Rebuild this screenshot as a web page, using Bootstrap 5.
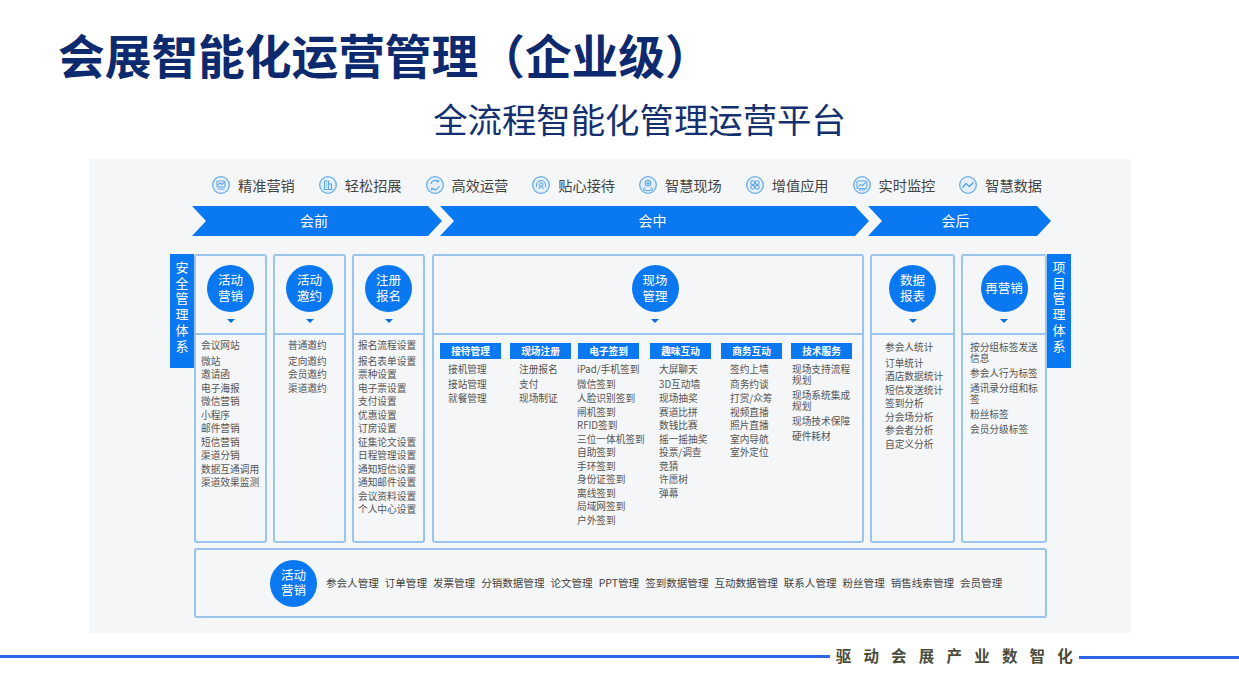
<!DOCTYPE html>
<html lang="zh-CN">
<head>
  <meta charset="UTF-8">
  <meta name="viewport" content="width=device-width, initial-scale=1.0">
  <link href="https://cdn.jsdelivr.net/npm/bootstrap@5.3.1/dist/css/bootstrap.min.css" rel="stylesheet">
  <title>会展智能化运营管理</title>
  <style>
    html, body { height: 697px; overflow: hidden; background: #fff; }
    body { font-family: "Noto Sans CJK SC", "Liberation Sans", sans-serif; }
    .page-title { margin: 0; padding: 9px 0 0 58px; height: 93px; font-size: 46.7px; line-height: 90px; font-weight: 700; color: #0d2a6e; white-space: nowrap; }
    .page-sub { height: 66px; font-size: 34.4px; line-height: 50px; text-align: center; color: #14306f; margin-left: 40px; }
    .panel-bg { width: 1042px; height: 474px; margin-left: 89px; background: #f4f6f8; padding-top: 15px; }
    .icon-row { padding-left: 123px; height: 32px; }
    .icon-item { width: 106.750px; gap: 8px; font-size: 14.2px; line-height: 22px; color: #444; flex: none; }
    .icon-item svg { width: 18px; height: 18px; flex: none; margin-top: 2px; }
    .ico { fill: none; stroke: #5ea6ea; stroke-width: 1.1; }
    .ring { fill: #e6f0fa; stroke: #68ace9; stroke-width: 1.300; }
    .trend { stroke-width: 1.600; }
    .arrow-row { padding-left: 103px; height: 48px; }
    .phase { height: 30px; line-height: 28px; background: #0a78f0; color: #fff; font-size: 14px; text-align: center; }
    .phase-a { width: 250px; padding-right: 6px; clip-path: polygon(0 0, 236px 0, 100% 50%, 236px 100%, 0 100%, 14px 50%); }
    .phase-b { width: 429px; padding-right: 4px; margin-left: -2px; clip-path: polygon(0 0, 415px 0, 100% 50%, 415px 100%, 0 100%, 14px 50%); }
    .phase-c { width: 183px; padding-right: 8px; margin-left: -1px; clip-path: polygon(0 0, 169px 0, 100% 50%, 169px 100%, 0 100%, 14px 50%); }
    .diagram { padding-left: 81px; height: 294px; }
    .side-tab { width: 24px; height: 114px; flex: none; background: #0a78f0; color: #fff; font-size: 13px; line-height: 15.7px; text-align: center; padding-top: 5px; }
    .stage { height: 289px; border: 2px solid #9ac4ec; border-radius: 3px; flex: none; margin-right: 6px; }
    .w-a { width: 73px; }
    .w-b { width: 432px; margin-left: 1px; }
    .w-c { width: 85px; }
    .w-d { width: 86px; margin-right: 0; }
    .stage-head { height: 79px; border-bottom: 2px solid #9ac4ec; padding-top: 9px; }
    .head-shift { padding-left: 14px; }
    .ball { width: 47px; height: 47px; flex: none; border-radius: 50%; background: #0a78f0; color: #fff; font-size: 12.5px; line-height: 15.5px; text-align: center; padding-bottom: 2px; }
    .drop { width: 0; height: 0; margin-top: 7px; border-left: 4px solid transparent; border-right: 4px solid transparent; border-top: 4px solid #0a6fd8; }
    .item-list { font-size: 9.7px; line-height: 13.5px; color: #555; padding-top: 4px; white-space: nowrap; }
    .item-list div:nth-child(2) { margin-top: 2px; }
    .pad-5 { padding-left: 5px; }
    .pad-13 { padding-left: 13px; }
    .pad-4 { padding-left: 4px; }
    .top-6 { padding-top: 6px; }
    .tag-row { padding: 8px 0 0 6px; }
    .tag-col { width: 61px; flex: none; }
    .ml-9 { margin-left: 9px; }
    .ml-7 { margin-left: 7px; }
    .ml-11 { margin-left: 11px; }
    .ml-10 { margin-left: 10px; }
    .tag-name { width: 61px; height: 16px; background: #0a78f0; color: #fff; font-size: 9.7px; line-height: 16px; font-weight: 700; text-align: center; }
    .sub-list { font-size: 9.7px; line-height: 13.5px; color: #555; padding-top: 4px; white-space: nowrap; }
    .sub-list div:nth-child(2), .sub-list div:nth-child(3) { margin-top: 1px; }
    .ind-8 { padding-left: 8px; }
    .ind-9 { padding-left: 9px; }
    .ind-out { margin-left: -1px; }
    .wrap-list { font-size: 9.7px; line-height: 11px; color: #555; }
    .wrap-list div { margin-bottom: 4px; }
    .wrap-tech { width: 63px; padding: 5px 0 0 1px; }
    .wrap-again { padding: 7px 7px 0 7px; }
    .mgmt-bar { width: 853px; height: 70px; margin-left: 105px; border: 2px solid #9ac4ec; border-radius: 3px; padding-left: 74px; gap: 6px; font-size: 10.56px; color: #444; white-space: nowrap; }
    .mgmt-bar .ball { margin-right: 3px; }
    .foot-row { height: 60px; padding-top: 22px; }
    .foot-line { height: 3px; background: #2f66e8; }
    .foot-line-right { width: 160px; margin-top: 1px; }
    .foot-text { font-size: 15.5px; line-height: 20px; font-weight: 700; color: #4c4c3a; letter-spacing: 12.2px; margin: -10px -6px 0 6px; white-space: nowrap; }
  </style>
</head>
<body>
  <h1 class="page-title">会展智能化运营管理（企业级）</h1>
  <div class="page-sub">全流程智能化管理运营平台</div>

  <div class="panel-bg">
    <div class="icon-row d-flex">
      <div class="icon-item d-flex">
        <svg viewBox="0 0 18 18"><circle class="ring" cx="9" cy="9" r="8.300"/><rect class="ico" x="5" y="5" width="8" height="6" rx="1"/><path class="ico" d="M6 9l2-2 2 1.500L12 6.500M5.500 13h7"/></svg>
        <span>精准营销</span>
      </div>
      <div class="icon-item d-flex">
        <svg viewBox="0 0 18 18"><circle class="ring" cx="9" cy="9" r="8.300"/><path class="ico" d="M5.500 13.500V5h4v8.500M9.500 8h3v5.500M4.500 13.500h9M7 7h1M7 9h1M7 11h1"/></svg>
        <span>轻松招展</span>
      </div>
      <div class="icon-item d-flex">
        <svg viewBox="0 0 18 18"><circle class="ring" cx="9" cy="9" r="8.300"/><path class="ico" d="M5 8a4.200 4.200 0 0 1 7-2.500M13 10a4.200 4.200 0 0 1-7 2.500M12.500 3.800v2h-2M5.500 14.200v-2h2"/></svg>
        <span>高效运营</span>
      </div>
      <div class="icon-item d-flex">
        <svg viewBox="0 0 18 18"><circle class="ring" cx="9" cy="9" r="8.300"/><path class="ico" d="M4.500 11V9a4.500 4.500 0 0 1 9 0v2"/><circle class="ico" cx="9" cy="8.500" r="1.800"/><path class="ico" d="M6.500 13c.3-1.500 1.200-2.300 2.500-2.300s2.200.8 2.500 2.300"/></svg>
        <span>贴心接待</span>
      </div>
      <div class="icon-item d-flex">
        <svg viewBox="0 0 18 18"><circle class="ring" cx="9" cy="9" r="8.300"/><circle class="ico" cx="9" cy="7" r="2.800"/><circle class="ico" cx="9" cy="7" r="1"/><path class="ico" d="M6.500 11.500c-1.500.5-2 1-2 1.500 0 .8 2 1.500 4.500 1.500s4.500-.7 4.500-1.500c0-.5-.5-1-2-1.500"/></svg>
        <span>智慧现场</span>
      </div>
      <div class="icon-item d-flex">
        <svg viewBox="0 0 18 18"><circle class="ring" cx="9" cy="9" r="8.300"/><circle class="ico" cx="6.700" cy="6.700" r="1.900"/><circle class="ico" cx="11.300" cy="6.700" r="1.900"/><circle class="ico" cx="6.700" cy="11.300" r="1.900"/><circle class="ico" cx="11.300" cy="11.300" r="1.900"/></svg>
        <span>增值应用</span>
      </div>
      <div class="icon-item d-flex">
        <svg viewBox="0 0 18 18"><circle class="ring" cx="9" cy="9" r="8.300"/><rect class="ico" x="4" y="5" width="10" height="7.500" rx="1"/><path class="ico" d="M5.500 11l2.200-2.500 1.800 1.200L12.500 6.500M6 14h6"/></svg>
        <span>实时监控</span>
      </div>
      <div class="icon-item d-flex">
        <svg viewBox="0 0 18 18"><circle class="ring" cx="9" cy="9" r="8.300"/><path class="ico trend" d="M3.500 11.500L7 7.500l3.500 3L14.500 6.500"/></svg>
        <span>智慧数据</span>
      </div>
    </div>

    <div class="arrow-row d-flex">
      <div class="phase phase-a">会前</div>
      <div class="phase phase-b">会中</div>
      <div class="phase phase-c">会后</div>
    </div>

    <div class="diagram d-flex">
      <div class="side-tab">安全管理体系</div>

      <div class="stage w-a">
        <div class="stage-head d-flex flex-column align-items-center">
          <div class="ball d-flex align-items-center justify-content-center">活动<br>营销</div>
          <div class="drop"></div>
        </div>
        <div class="item-list pad-5">
          <div>会议网站</div><div>微站</div><div>邀请函</div><div>电子海报</div><div>微信营销</div><div>小程序</div><div>邮件营销</div><div>短信营销</div><div>渠道分销</div><div>数据互通调用</div><div>渠道效果监测</div>
        </div>
      </div>

      <div class="stage w-a">
        <div class="stage-head d-flex flex-column align-items-center">
          <div class="ball d-flex align-items-center justify-content-center">活动<br>邀约</div>
          <div class="drop"></div>
        </div>
        <div class="item-list pad-13">
          <div>普通邀约</div><div>定向邀约</div><div>会员邀约</div><div>渠道邀约</div>
        </div>
      </div>

      <div class="stage w-a">
        <div class="stage-head d-flex flex-column align-items-center">
          <div class="ball d-flex align-items-center justify-content-center">注册<br>报名</div>
          <div class="drop"></div>
        </div>
        <div class="item-list pad-4">
          <div>报名流程设置</div><div>报名表单设置</div><div>票种设置</div><div>电子票设置</div><div>支付设置</div><div>优惠设置</div><div>订房设置</div><div>征集论文设置</div><div>日程管理设置</div><div>通知短信设置</div><div>通知邮件设置</div><div>会议资料设置</div><div>个人中心设置</div>
        </div>
      </div>

      <div class="stage w-b">
        <div class="stage-head head-shift d-flex flex-column align-items-center">
          <div class="ball d-flex align-items-center justify-content-center">现场<br>管理</div>
          <div class="drop"></div>
        </div>
        <div class="tag-row d-flex">
          <div class="tag-col">
            <div class="tag-name">接待管理</div>
            <div class="sub-list ind-8"><div>接机管理</div><div>接站管理</div><div>就餐管理</div></div>
          </div>
          <div class="tag-col ml-9">
            <div class="tag-name">现场注册</div>
            <div class="sub-list ind-9"><div>注册报名</div><div>支付</div><div>现场制证</div></div>
          </div>
          <div class="tag-col ml-7">
            <div class="tag-name">电子签到</div>
            <div class="sub-list ind-out"><div>iPad/手机签到</div><div>微信签到</div><div>人脸识别签到</div><div>闸机签到</div><div>RFID签到</div><div>三位一体机签到</div><div>自助签到</div><div>手环签到</div><div>身份证签到</div><div>离线签到</div><div>局域网签到</div><div>户外签到</div></div>
          </div>
          <div class="tag-col ml-11">
            <div class="tag-name">趣味互动</div>
            <div class="sub-list ind-9"><div>大屏聊天</div><div>3D互动墙</div><div>现场抽奖</div><div>赛道比拼</div><div>数钱比赛</div><div>摇一摇抽奖</div><div>投票/调查</div><div>竞猜</div><div>许愿树</div><div>弹幕</div></div>
          </div>
          <div class="tag-col ml-10">
            <div class="tag-name">商务互动</div>
            <div class="sub-list ind-9"><div>签约上墙</div><div>商务约谈</div><div>打赏/众筹</div><div>视频直播</div><div>照片直播</div><div>室内导航</div><div>室外定位</div></div>
          </div>
          <div class="tag-col ml-9">
            <div class="tag-name">技术服务</div>
            <div class="wrap-list wrap-tech"><div>现场支持流程规划</div><div>现场系统集成规划</div><div>现场技术保障</div><div>硬件耗材</div></div>
          </div>
        </div>
      </div>

      <div class="stage w-c">
        <div class="stage-head d-flex flex-column align-items-center">
          <div class="ball d-flex align-items-center justify-content-center">数据<br>报表</div>
          <div class="drop"></div>
        </div>
        <div class="item-list pad-13 top-6">
          <div>参会人统计</div><div>订单统计</div><div>酒店数据统计</div><div>短信发送统计</div><div>签到分析</div><div>分会场分析</div><div>参会者分析</div><div>自定义分析</div>
        </div>
      </div>

      <div class="stage w-d">
        <div class="stage-head d-flex flex-column align-items-center">
          <div class="ball d-flex align-items-center justify-content-center">再营销</div>
          <div class="drop"></div>
        </div>
        <div class="wrap-list wrap-again">
          <div>按分组标签发送信息</div><div>参会人行为标签</div><div>通讯录分组和标签</div><div>粉丝标签</div><div>会员分级标签</div>
        </div>
      </div>

      <div class="side-tab">项目管理体系</div>
    </div>

    <div class="mgmt-bar d-flex align-items-center">
      <div class="ball d-flex align-items-center justify-content-center">活动<br>营销</div>
      <span>参会人管理</span><span>订单管理</span><span>发票管理</span><span>分销数据管理</span><span>论文管理</span><span>PPT管理</span><span>签到数据管理</span><span>互动数据管理</span><span>联系人管理</span><span>粉丝管理</span><span>销售线索管理</span><span>会员管理</span>
    </div>
  </div>

  <div class="foot-row d-flex">
    <div class="foot-line flex-grow-1"></div>
    <div class="foot-text">驱动会展产业数智化</div>
    <div class="foot-line foot-line-right"></div>
  </div>

  <script src="https://cdn.jsdelivr.net/npm/bootstrap@5.3.1/dist/js/bootstrap.bundle.min.js"></script>
</body>
</html>
